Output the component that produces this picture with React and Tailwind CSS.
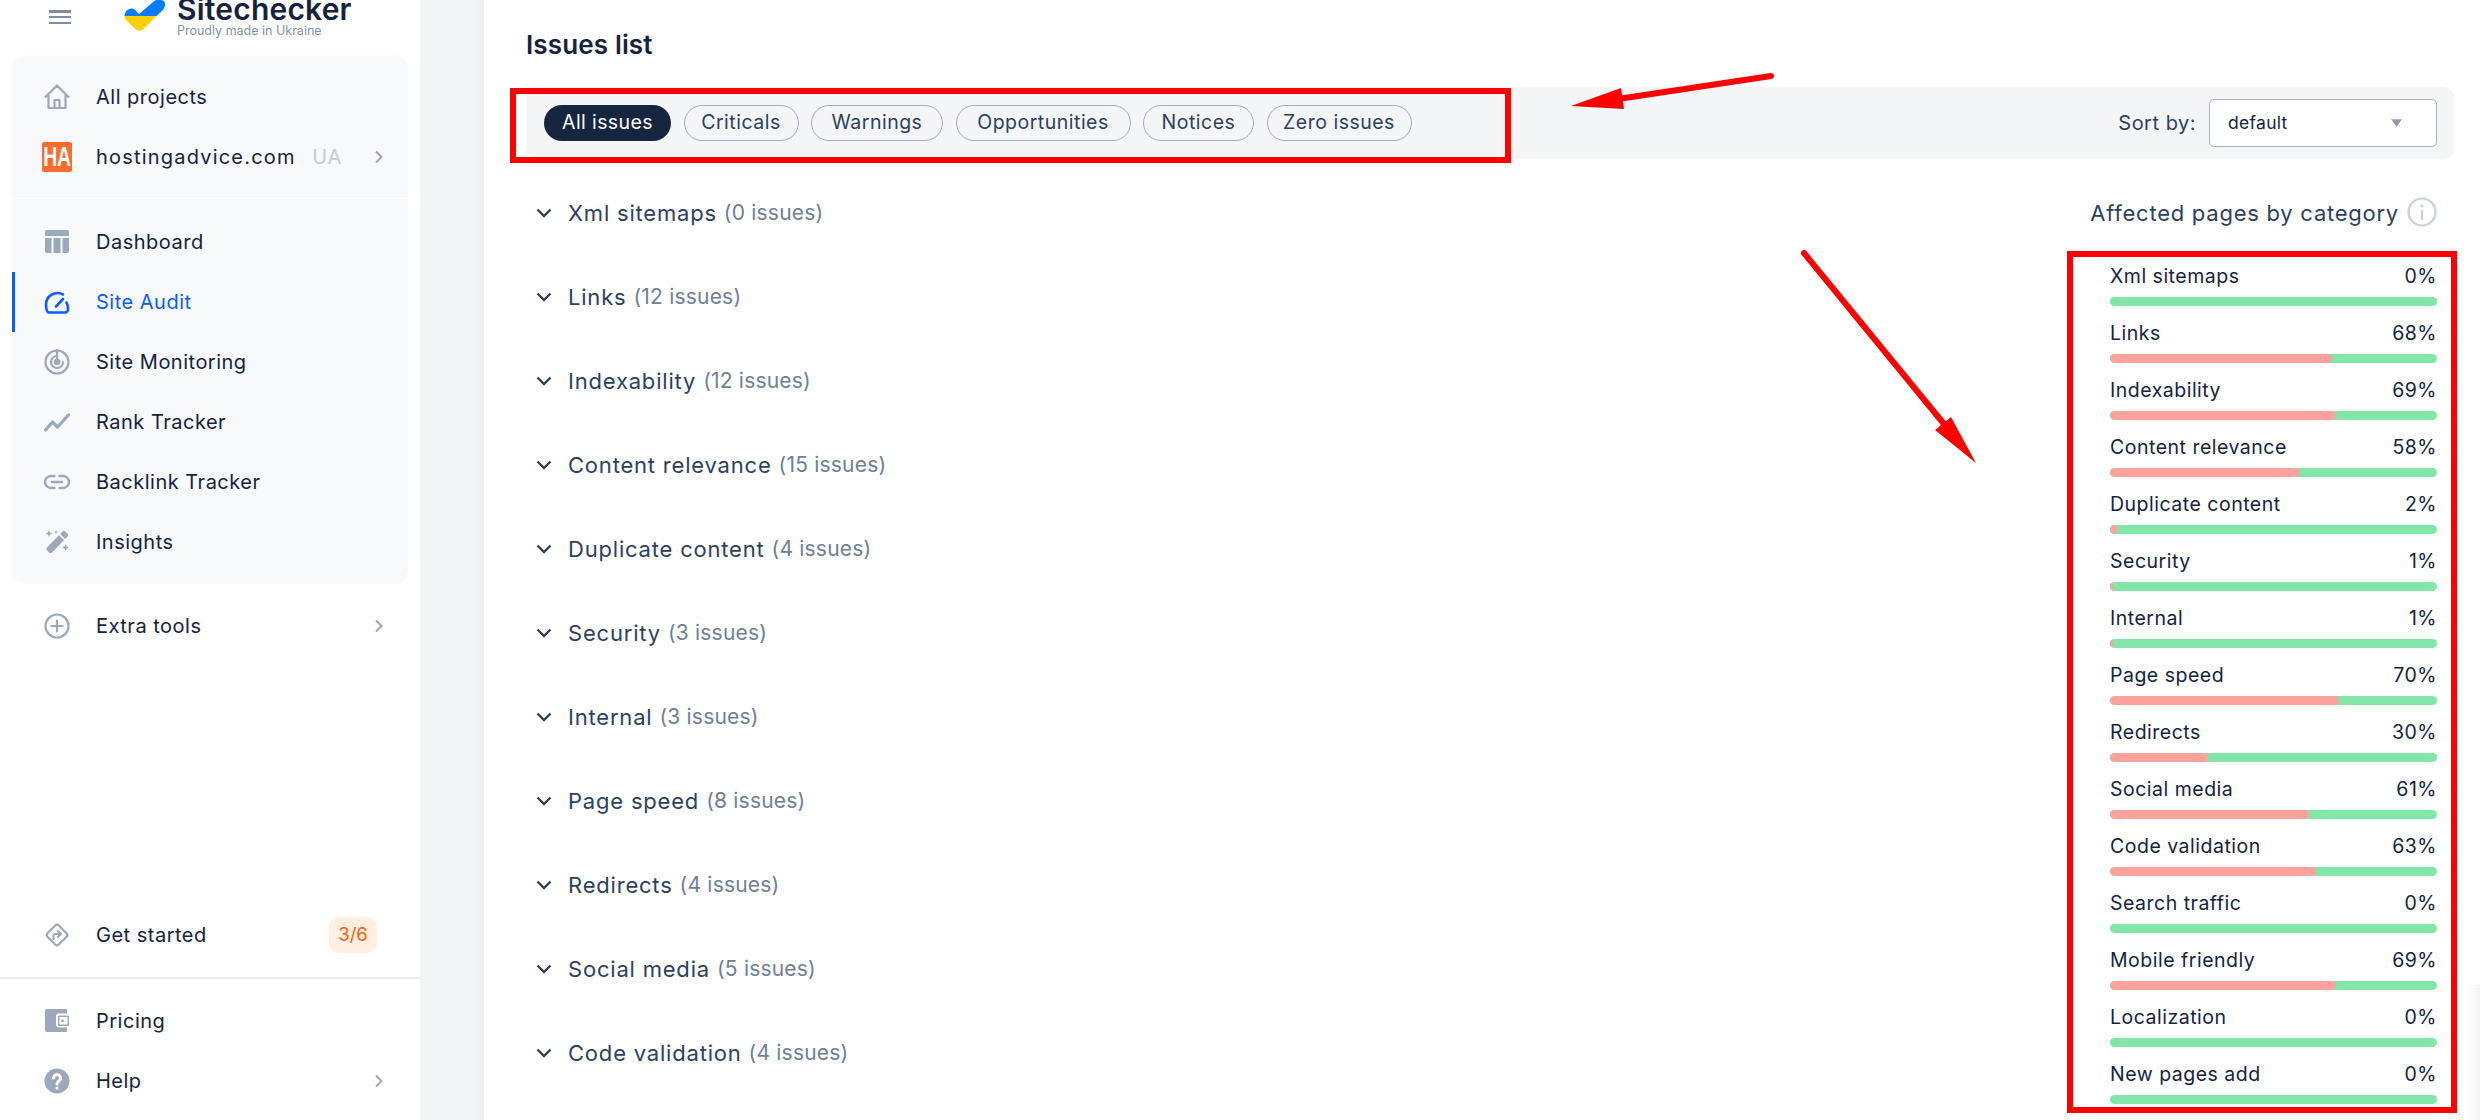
const F = "font-['Inter','Liberation_Sans',sans-serif]";

const Ic = ({ children, className = "text-[#9ca8bb]" }) => (
  <svg viewBox="0 0 26 26" className={`w-[26px] h-[26px] shrink-0 ${className}`} fill="none" stroke="currentColor" strokeWidth="2.2" strokeLinecap="round" strokeLinejoin="round">{children}</svg>
);

const Chev = () => (
  <svg viewBox="0 0 10 14" className="w-[10px] h-[14px] shrink-0 text-[#9ca8bb]" fill="none" stroke="currentColor" strokeWidth="2"><path d="M2 1.500 7.500 7 2 12.500" /></svg>
);

const icons = {
  home: <Ic><path d="M1.500 13 13 1.500 24.500 13M4.500 11v13h17V11M10.500 24v-8h5v8" /></Ic>,
  dash: <Ic><g fill="currentColor" stroke="none"><path d="M1 3a2 2 0 0 1 2-2h20a2 2 0 0 1 2 2v4H1z" /><path d="M1 9h6.500v15H3a2 2 0 0 1-2-2zM9.500 9h7v15h-7zM18.500 9H25v13a2 2 0 0 1-2 2h-4.500z" /></g></Ic>,
  audit: <Ic className="text-[#0b5cff]"><path strokeWidth="2.600" d="M5 23.500H21a3 3 0 0 0 3-3.500c0-2.500-.4-4.500-1.500-6.500M19 5.500A11.500 11.500 0 0 0 2 15.500c0 2 0 4 1 6.500 .5 1 1 1.500 2 1.500" /><path strokeWidth="2.600" d="M12 17.500 19 10" /></Ic>,
  radar: <Ic><circle cx="13" cy="13" r="11.500" /><path d="M13 7a6 6 0 1 0 6 6" /><circle cx="13" cy="13" r="2.200" fill="currentColor" /><path d="M13 1v12" /></Ic>,
  rank: <Ic><path strokeWidth="3.200" d="M1.500 21 8.500 13l5 5L24.500 6" /></Ic>,
  link: <Ic><path strokeWidth="2.400" d="M10.500 7H7a6 6 0 0 0 0 12h3.500M15.500 7H19a6 6 0 0 1 0 12h-3.500M8 13h10" /></Ic>,
  wand: <Ic><g fill="currentColor" stroke="none"><path d="M18.500 2.500a2 2 0 0 1 2.800 0l2.200 2.200a2 2 0 0 1 0 2.800L8 23.500a2 2 0 0 1-2.800 0L3 21.300a2 2 0 0 1 0-2.800z" /><path d="M5 1l1 2.500L8.500 4.500 6 5.500 5 8 4 5.500 1.500 4.500 4 3.500zM12 1l.6 1.400L14 3l-1.400.6L12 5l-.6-1.400L10 3l1.400-.6zM21.500 15l1 2.500 2.500 1-2.500 1-1 2.500-1-2.500-2.500-1 2.500-1z" /></g><path stroke="#f7f9fb" strokeWidth="1.600" d="M15.500 5.500 20.500 10.500" /></Ic>,
  plus: <Ic><circle cx="13" cy="13" r="11.500" /><path d="M13 7.500v11M7.500 13h11" /></Ic>,
  sign: <Ic><rect x="5" y="5" width="16" height="16" rx="2.500" transform="rotate(45 13 13)" /><path d="M9.500 17v-3a2 2 0 0 1 2-2h5M14 9l3 3-3 3" /></Ic>,
  wallet: <Ic><path fill="currentColor" stroke="none" d="M3 1h19a1 1 0 0 1 1 1v3.500H15a3 3 0 0 0-3 3v8a3 3 0 0 0 3 3h8V23a1 1 0 0 1-1 1H3a2 2 0 0 1-2-2V3a2 2 0 0 1 2-2z" /><rect x="14" y="7.500" width="11" height="10.500" rx="1" fill="currentColor" stroke="none" /><rect x="15.500" y="9" width="8" height="7.500" fill="#ffffff" stroke="none" /><circle cx="18.500" cy="12.800" r="1.400" fill="currentColor" stroke="none" /></Ic>,
  help: <Ic><circle cx="13" cy="13" r="12.500" fill="currentColor" stroke="none" /><path stroke="#ffffff" strokeWidth="3" d="M9.500 10a3.500 3.500 0 1 1 5.500 3c-1.300.9-2 1.500-2 3" /><circle cx="13" cy="20" r="1.500" fill="#ffffff" stroke="none" /></Ic>,
};

const Item = ({ icon, label, active, right, wide }) => (
  <div className="relative flex items-center h-[60px] pl-[32px] pr-[24px]">
    {active && <div className="absolute left-0 top-0 bottom-0 w-[3px] bg-[#0b5cff]" />}
    {icon}
    <span className={`ml-[26px] text-[20px] font-normal ${wide ? "tracking-[1.200px]" : "tracking-[0.500px]"} ${active ? "text-[#0b5cff]" : "text-[#14233e]"}`}>{label}</span>
    {right && <div className="ml-auto flex items-center">{right}</div>}
  </div>
);

const Sidebar = () => (
  <aside className="w-[420px] h-[1120px] shrink-0 bg-white flex flex-col overflow-hidden">
    <div className="h-[55px] shrink-0 flex items-start pl-[49px] overflow-hidden">
      <div className="mt-[10px] w-[22px] h-[14px] flex flex-col justify-between">
        <div className="h-[2.500px] bg-[#7f8da3]" />
        <div className="h-[2.500px] bg-[#7f8da3]" />
        <div className="h-[2.500px] bg-[#7f8da3]" />
      </div>
      <svg viewBox="0 0 42 32" className="w-[42px] h-[32px] ml-[53px] shrink-0">
        <path d="M0.500 16 C0.500 11 6 6 11 10 L15 14 L29 2 Q32 -1 37 0 Q42 1 41 6 Q40 9 38 11 L32.500 16Z" fill="#0b7bff" />
        <path d="M0.500 16 L32.500 16 L20 28.500 Q15.500 33 11 28.500 L3 21 Q0.500 18.500 0.500 16Z" fill="#ffd000" />
      </svg>
      <div className="ml-[11px] -mt-[9px] flex flex-col">
        <span className="text-[30px] leading-[36px] font-semibold text-[#16233f] tracking-[0.200px]">Sitechecker</span>
        <span className="text-[12.500px] leading-[14px] -mt-[3px] text-[#8292a8]">Proudly made in Ukraine</span>
      </div>
    </div>
    <div className="mx-[12px] bg-[#f7f9fb] rounded-[14px] h-[529px] shrink-0 flex flex-col">
      <div className="h-[144px] shrink-0 pt-[12px] border-b border-white">
        <Item icon={icons.home} label="All projects" />
        <Item
          icon={<div className="w-[30px] h-[30px] -ml-[2px] -mr-[2px] shrink-0 rounded-[2px] bg-[#ff6b2b] text-white flex items-center justify-center font-['Liberation_Sans',sans-serif] font-bold text-[27px] tracking-[-0.500px] overflow-hidden"><span className="scale-x-[0.72] whitespace-nowrap">HA</span></div>}
          label="hostingadvice.com"
          wide
          right={<><span className="text-[#c5ccd8] text-[20px] font-normal mr-[32px] tracking-[0.700px]">UA</span><Chev /></>}
        />
      </div>
      <div className="pt-[13px]">
        <Item icon={icons.dash} label="Dashboard" />
        <Item icon={icons.audit} label="Site Audit" active />
        <Item icon={icons.radar} label="Site Monitoring" />
        <Item icon={icons.rank} label="Rank Tracker" />
        <Item icon={icons.link} label="Backlink Tracker" />
        <Item icon={icons.wand} label="Insights" />
      </div>
    </div>
    <div className="mt-[12px] mx-[12px]"><Item icon={icons.plus} label="Extra tools" right={<Chev />} /></div>
    <div className="flex-1" />
    <div className="mx-[12px] mb-[12px]">
      <Item icon={icons.sign} label="Get started" right={<span className="mr-[7px] w-[48px] h-[36px] rounded-[10px] bg-[#fff0e0] text-[#ff5a0a] text-[18.500px] font-normal flex items-center justify-center">3/6</span>} />
    </div>
    <div className="border-t-2 border-[#e9ecf0]" />
    <div className="mx-[12px] mt-[12px] mb-[9px]">
      <Item icon={icons.wallet} label="Pricing" />
      <Item icon={icons.help} label="Help" right={<Chev />} />
    </div>
  </aside>
);

const chips = [["Criticals", "w-[115px]"], ["Warnings", "w-[132px]"], ["Opportunities", "w-[175px]"], ["Notices", "w-[111px]"], ["Zero issues", "w-[145px]"]];
const issues = [["Xml sitemaps", 0], ["Links", 12], ["Indexability", 12], ["Content relevance", 15], ["Duplicate content", 4], ["Security", 3], ["Internal", 3], ["Page speed", 8], ["Redirects", 4], ["Social media", 5], ["Code validation", 4]];
const cats = [["Xml sitemaps", 0], ["Links", 68], ["Indexability", 69], ["Content relevance", 58], ["Duplicate content", 2], ["Security", 1], ["Internal", 1], ["Page speed", 70], ["Redirects", 30], ["Social media", 61], ["Code validation", 63], ["Search traffic", 0], ["Mobile friendly", 69], ["Localization", 0], ["New pages add", 0]];

const Main = () => (
  <main className="flex-1 min-w-0 h-[1120px] bg-white overflow-hidden pl-[42px] pr-[26px]">
    <h1 className="h-[87px] pt-[26px] text-[26px] leading-[38px] font-semibold text-[#16233f] tracking-[0.150px]">Issues list</h1>
    <div className="h-[72px] rounded-[10px] bg-[#f3f5f7] flex items-center pl-[18px] pr-[17px]">
      <div className="flex gap-[12.500px]">
        <span className="h-[36px] w-[127px] justify-center rounded-full bg-[#16263f] text-white text-[19.500px] font-normal tracking-[0.400px] flex items-center">All issues</span>
        {chips.map(([c, w]) => (
          <span key={c} className={`h-[36px] ${w} justify-center rounded-full border border-[#9fadc2] text-[#2c4160] text-[19.500px] font-normal tracking-[0.500px] flex items-center`}>{c}</span>
        ))}
      </div>
      <span className="ml-auto text-[20px] font-normal text-[#2c4160] tracking-[0.500px] mr-[13px]">Sort by:</span>
      <div className="w-[228px] h-[48px] rounded-[5px] border border-[#a4b0c3] bg-white flex items-center pl-[18px] pr-[34px]">
        <span className="text-[17.500px] font-normal text-[#14233e] tracking-[0.300px]">default</span>
        <svg viewBox="0 0 12 8" className="ml-auto w-[11px] h-[8px] text-[#8e9cb1]"><path d="M0 0h12L6 8z" fill="currentColor" /></svg>
      </div>
    </div>
    <div className="flex">
      <div className="flex-1 pt-[27px] pl-[10px]">
        {issues.map(([n, c]) => (
          <div key={n} className="h-[84px] flex items-start pt-[11px]">
            <svg viewBox="0 0 16 10" className="w-[16px] h-[10px] mt-[11px] shrink-0 text-[#2c4160]" fill="none" stroke="currentColor" strokeWidth="2.400"><path d="M1.500 1.500 8 8l6.500-6.500" /></svg>
            <span className="ml-[16px] text-[22px] leading-[32px] font-normal text-[#2c4160] tracking-[0.800px]">{n}</span>
            <span className="ml-[7px] text-[21px] leading-[32px] text-[#6d7f98] tracking-[0.200px]">({c} issues)</span>
          </div>
        ))}
      </div>
      <div className="w-[327px] mr-[17px] shrink-0">
        <div className="h-[75px] pt-[38px] flex items-start justify-end whitespace-nowrap">
          <span className="text-[22px] leading-[32px] font-normal text-[#2c4160] tracking-[0.750px]">Affected pages by category</span>
          <svg viewBox="0 0 30 30" className="ml-[8px] w-[30px] h-[30px] shrink-0 text-[#c7d0dc]" fill="none" stroke="currentColor" strokeWidth="2.200"><circle cx="15" cy="15" r="13.500" /><path strokeLinecap="round" d="M15 14v8" /><circle cx="15" cy="9" r="1.400" fill="currentColor" stroke="none" /></svg>
        </div>
        <div className="flex flex-col gap-[8px] pt-[23px]">
          {cats.map(([n, p]) => (
            <div key={n} className="h-[49px] flex flex-col">
              <div className="flex justify-between h-[40px] pt-[5px] items-start text-[19.500px] leading-[28px] font-normal text-[#14233e] tracking-[0.500px]">
                <span>{n}</span><span>{p}%</span>
              </div>
              <div className="h-[9px] rounded-full bg-[#82e6a9] overflow-hidden">
                <div className="h-full rounded-full bg-[#fca19c]" style={{ width: `${p}%` }} />
              </div>
            </div>
          ))}
        </div>
      </div>
    </div>
  </main>
);

export default function App() {
  return (
    <div className={`relative flex w-[2480px] h-[1120px] overflow-hidden bg-white ${F}`}>
      <Sidebar />
      <div className="w-[64px] h-[1120px] shrink-0 bg-[linear-gradient(90deg,#f3f4f6_85%,#eeeff2)]" />
      <Main />
      <div className="absolute left-[2466px] top-[985px] w-[14px] h-[135px] bg-[linear-gradient(90deg,#ffffff,#f4f4f5)]" />
      <div className="absolute left-[510px] top-[88px] w-[1001px] h-[75px] border-[6px] border-[#ff0000]" />
      <div className="absolute left-[2067px] top-[251px] w-[390px] h-[862px] border-[6px] border-[#ff0000]" />
      <svg className="absolute left-0 top-0 w-[2480px] h-[1120px] pointer-events-none" viewBox="0 0 2480 1120" fill="#ff0000" stroke="none">
        <path d="M1771 76 1618 99" stroke="#ff0000" strokeWidth="6" strokeLinecap="round" />
        <path d="M1571 106 1621 88 1624 109z" />
        <path d="M1804 253 1944 424" stroke="#ff0000" strokeWidth="6" strokeLinecap="round" />
        <path d="M1976 463 1935 430 1951 417z" />
      </svg>
    </div>
  );
}
